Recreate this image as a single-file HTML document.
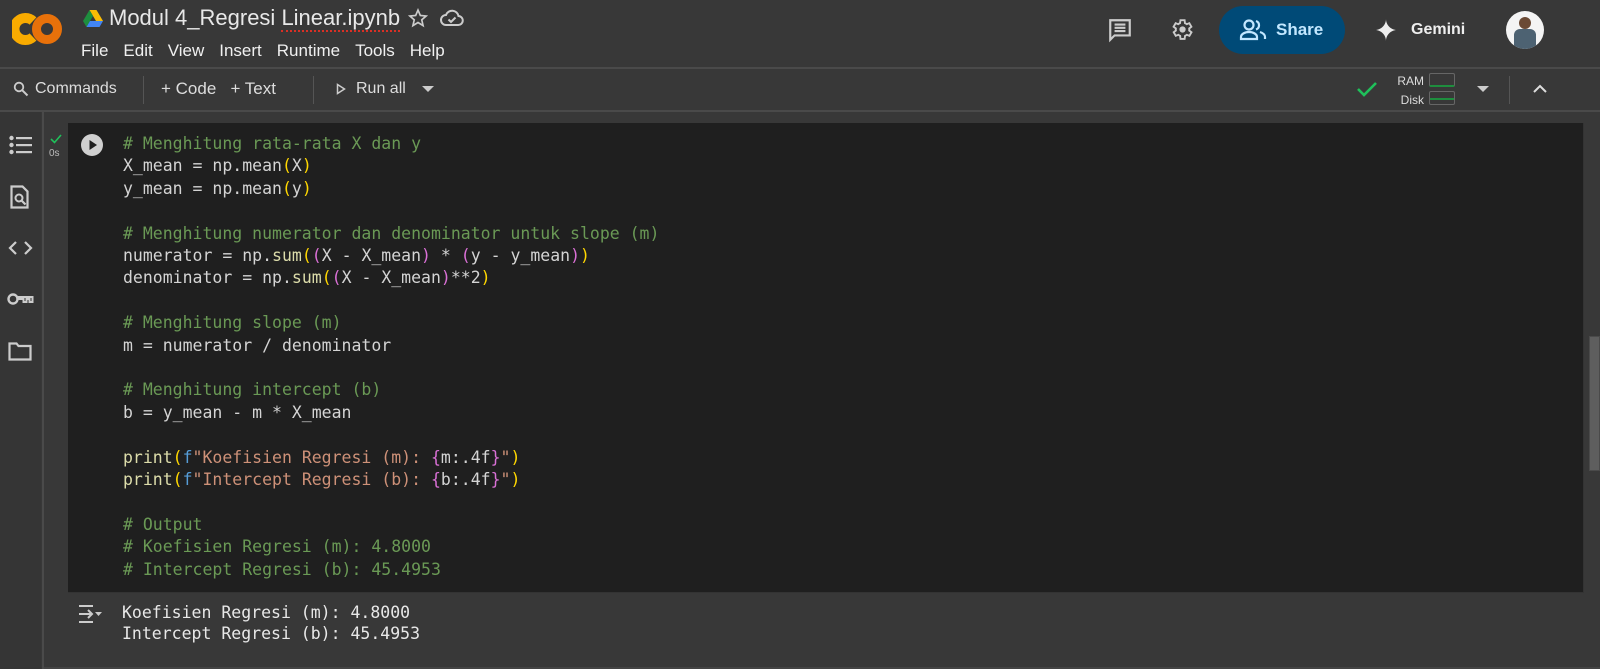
<!DOCTYPE html>
<html><head><meta charset="utf-8"><style>
*{margin:0;padding:0;box-sizing:border-box}
body{width:1600px;height:669px;background:#383838;font-family:"Liberation Sans",sans-serif;color:#e3e3e3;position:relative;overflow:hidden}
.abs{position:absolute}
.hl{position:absolute;left:0;width:1600px;height:2px;background:#4a4a4a}
.menu span{margin-right:15px}
.code{font-family:"DejaVu Sans Mono",monospace;font-size:16.5px;line-height:22.4px;white-space:pre;color:#d4d4d4}
.c{color:#6a9955}.y{color:#ffd700}.p{color:#da70d6}.s{color:#ce9178}.f{color:#dcdcaa}.b{color:#569cd6}
</style></head><body>
<svg class="abs" style="left:12px;top:12px" width="50" height="34" viewBox="0 0 50 34">
<path d="M21 9 A11 11 0 1 0 21 25" stroke="#f9ab00" stroke-width="10" fill="none"/>
<circle cx="35" cy="17" r="10.5" stroke="#e8710a" stroke-width="9" fill="none"/>
</svg>
<svg class="abs" style="left:83px;top:10px" width="20" height="17" viewBox="0 0 20 17">
<path d="M6.5 0h7l6.5 11h-7z" fill="#fbbc04"/><path d="M6.5 0 0 11l3.5 6 6.5-11z" fill="#1e8e3e"/><path d="M3.5 17h13l3.5-6H7z" fill="#4285f4"/>
</svg>
<div class="abs" style="left:109px;top:5px;font-size:22px;color:#e8e8e8">Modul 4_Regresi <span style="border-bottom:2px dotted #d93025">Linear.ipynb</span></div>
<svg class="abs" style="left:408px;top:8px" width="20" height="20" viewBox="0 0 24 24"><path d="M12 2.5l2.8 6.5 7 .6-5.3 4.6 1.6 6.9L12 17.4l-6.1 3.7 1.6-6.9L2.2 9.6l7-.6z" fill="none" stroke="#ccc" stroke-width="2"/></svg>
<svg class="abs" style="left:440px;top:8px" width="24" height="20" viewBox="0 0 24 20"><path d="M6 17h12a4.5 4.5 0 0 0 .5-9A6.5 6.5 0 0 0 6 7a5 5 0 0 0 0 10z" fill="none" stroke="#ccc" stroke-width="2"/><path d="M8.5 11.5l2.5 2.5 4.5-4.5" fill="none" stroke="#ccc" stroke-width="2"/></svg>
<div class="abs menu" style="left:81px;top:41px;font-size:17px;color:#f0f0f0"><span>File</span><span>Edit</span><span>View</span><span>Insert</span><span>Runtime</span><span>Tools</span><span>Help</span></div>
<svg class="abs" style="left:1107px;top:17px" width="26" height="26" viewBox="0 0 24 24"><path d="M3 3h18v14H7l-4 4z" fill="none" stroke="#ccc" stroke-width="2"/><path d="M7 7h10M7 10h10M7 13h10" stroke="#ccc" stroke-width="2"/></svg>
<svg class="abs" style="left:1169px;top:17px" width="25" height="25" viewBox="0 0 24 24"><path d="M19.4 13a7.6 7.6 0 0 0 0-2l2.1-1.6-2-3.5-2.5 1a7 7 0 0 0-1.7-1L15 3h-4l-.4 2.9a7 7 0 0 0-1.7 1l-2.5-1-2 3.5L6.6 11a7.6 7.6 0 0 0 0 2l-2.1 1.6 2 3.5 2.5-1a7 7 0 0 0 1.7 1L11 21h4l.4-2.9a7 7 0 0 0 1.7-1l2.5 1 2-3.5z" fill="none" stroke="#ccc" stroke-width="1.8"/><circle cx="13" cy="12" r="3" fill="#ccc"/></svg>
<div class="abs" style="left:1219px;top:6px;width:126px;height:48px;border-radius:24px;background:#004a77"></div>
<svg class="abs" style="left:1239px;top:19px" width="28" height="22" viewBox="0 0 28 22"><circle cx="10" cy="6" r="4.5" fill="none" stroke="#c2e7ff" stroke-width="2.2"/><path d="M2 20v-2c0-3 4-5 8-5s8 2 8 5v2z" fill="none" stroke="#c2e7ff" stroke-width="2.2"/><path d="M17 2a4.5 4.5 0 0 1 0 8.5M21 13c3 1 5 2.5 5 5v2" fill="none" stroke="#c2e7ff" stroke-width="2.2"/></svg>
<div class="abs" style="left:1276px;top:20px;font-size:17px;font-weight:bold;color:#c2e7ff">Share</div>
<svg class="abs" style="left:1375px;top:19px" width="22" height="22" viewBox="0 0 22 22"><path d="M11 0C11 6 16 11 22 11C16 11 11 16 11 22C11 16 6 11 0 11C6 11 11 6 11 0z" fill="#eee"/></svg>
<div class="abs" style="left:1411px;top:21px;font-size:16px;font-weight:bold;color:#eee">Gemini</div>
<div class="abs" style="left:1506px;top:11px;width:38px;height:38px;border-radius:50%;background:#f4f4f4;overflow:hidden"><div style="position:absolute;left:13px;top:6px;width:12px;height:12px;border-radius:50%;background:#6b4a35"></div><div style="position:absolute;left:8px;top:18px;width:22px;height:22px;background:#4d6272;border-radius:6px 6px 0 0"></div></div>
<div class="hl" style="top:67px"></div>
<svg class="abs" style="left:13px;top:81px" width="16" height="16" viewBox="0 0 16 16"><circle cx="6" cy="6" r="4.3" fill="none" stroke="#ccc" stroke-width="1.8"/><path d="M9.2 9.2 14.5 14.5" stroke="#ccc" stroke-width="2"/></svg>
<div class="abs" style="left:35px;top:80px;font-size:16px;color:#ddd">Commands</div>
<div class="abs" style="left:143px;top:76px;width:1px;height:28px;background:#555"></div>
<div class="abs" style="left:161px;top:79px;font-size:17px;color:#ddd">+ Code &nbsp;&nbsp;+ Text</div>
<div class="abs" style="left:313px;top:76px;width:1px;height:28px;background:#555"></div>
<svg class="abs" style="left:336px;top:83px" width="10" height="12" viewBox="0 0 10 12"><path d="M1.5 1.5v9l7-4.5z" fill="none" stroke="#ccc" stroke-width="1.5"/></svg>
<div class="abs" style="left:356px;top:80px;font-size:16px;color:#ddd">Run all</div>
<svg class="abs" style="left:422px;top:86px" width="12" height="7"><path d="M0 0h12L6 6z" fill="#ccc"/></svg>
<svg class="abs" style="left:1356px;top:80px" width="22" height="18" viewBox="0 0 22 18"><path d="M2 9l6 6L20 3" fill="none" stroke="#1fc05a" stroke-width="2.6"/></svg>
<div class="abs" style="left:1396px;top:72px;font-size:12px;color:#ddd;line-height:19px;text-align:right;width:28px">RAM<br>Disk</div>
<div class="abs" style="left:1429px;top:73px;width:26px;height:14px;border:1px solid #666;border-radius:2px;border-bottom:2px solid #1e8e3e"></div>
<div class="abs" style="left:1429px;top:91px;width:26px;height:14px;border:1px solid #666;border-radius:2px;"><div style="position:absolute;left:0;right:0;top:6px;height:2px;background:#1e8e3e"></div></div>
<svg class="abs" style="left:1477px;top:86px" width="12" height="7"><path d="M0 0h12L6 6z" fill="#ccc"/></svg>
<div class="abs" style="left:1509px;top:76px;width:1px;height:28px;background:#555"></div>
<svg class="abs" style="left:1533px;top:84px" width="14" height="9" viewBox="0 0 14 9"><path d="M1 8l6-6 6 6" fill="none" stroke="#ddd" stroke-width="2"/></svg>
<div class="hl" style="top:110px"></div>
<div class="abs" style="left:0;top:112px;width:41px;height:557px;background:#353535"></div>
<div class="abs" style="left:42px;top:112px;width:2px;height:557px;background:#4a4a4a"></div>
<svg class="abs" style="left:9px;top:135px" width="23" height="20" viewBox="0 0 23 20"><g fill="#ccc"><circle cx="2.5" cy="3" r="2.2"/><circle cx="2.5" cy="10" r="2.2"/><circle cx="2.5" cy="17" r="2.2"/><rect x="7" y="2" width="16" height="2.2"/><rect x="7" y="9" width="16" height="2.2"/><rect x="7" y="16" width="16" height="2.2"/></g></svg>
<svg class="abs" style="left:10px;top:185px" width="21" height="24" viewBox="0 0 21 24"><path d="M1.5 1.5h11l5 5v16h-16z" fill="none" stroke="#ccc" stroke-width="2.2"/><circle cx="9" cy="13" r="3.5" fill="none" stroke="#ccc" stroke-width="2"/><path d="M11.5 15.5l4 4" stroke="#ccc" stroke-width="2.2"/></svg>
<svg class="abs" style="left:8px;top:240px" width="25" height="16" viewBox="0 0 25 16"><path d="M8 2 2 8l6 6M17 2l6 6-6 6" fill="none" stroke="#ccc" stroke-width="2.2"/></svg>
<svg class="abs" style="left:7px;top:291px" width="27" height="16" viewBox="0 0 27 16"><circle cx="6" cy="8" r="4.5" fill="none" stroke="#ccc" stroke-width="2.4"/><path d="M10.5 6h15v5h-3v-3h-3v3h-3v-3h-6" fill="none" stroke="#ccc" stroke-width="2"/></svg>
<svg class="abs" style="left:8px;top:342px" width="24" height="19" viewBox="0 0 24 19"><path d="M1.5 1.5h7l2 2.5h12v13.5h-21z" fill="none" stroke="#ccc" stroke-width="2.2"/></svg>
<svg class="abs" style="left:50px;top:134px" width="12" height="10" viewBox="0 0 12 10"><path d="M1 5l3.5 3.5L11 1" fill="none" stroke="#1fc05a" stroke-width="1.6"/></svg>
<div class="abs" style="left:49px;top:148px;font-size:10px;color:#bbb">0s</div>
<div class="abs" style="left:68px;top:123px;width:1516px;height:470px;background:#1f1f1f;border-right:1px solid #333;border-bottom:1px solid #333"></div>
<svg class="abs" style="left:80px;top:133px" width="24" height="24" viewBox="0 0 24 24"><circle cx="12" cy="12" r="11" fill="#d0d0d0"/><path d="M9.5 7v10l7.5-5z" fill="#1f1f1f"/></svg>
<div class="abs code" style="left:123px;top:133px"><span class="c"># Menghitung rata-rata X dan y</span>
X_mean = np.mean<span class="y">(</span>X<span class="y">)</span>
y_mean = np.mean<span class="y">(</span>y<span class="y">)</span>

<span class="c"># Menghitung numerator dan denominator untuk slope (m)</span>
numerator = np.<span class="f">sum</span><span class="y">(</span><span class="p">(</span>X - X_mean<span class="p">)</span> * <span class="p">(</span>y - y_mean<span class="p">)</span><span class="y">)</span>
denominator = np.<span class="f">sum</span><span class="y">(</span><span class="p">(</span>X - X_mean<span class="p">)</span>**2<span class="y">)</span>

<span class="c"># Menghitung slope (m)</span>
m = numerator / denominator

<span class="c"># Menghitung intercept (b)</span>
b = y_mean - m * X_mean

<span class="f">print</span><span class="y">(</span><span class="b">f</span><span class="s">"Koefisien Regresi (m): </span><span class="p">{</span>m:.4f<span class="p">}</span><span class="s">"</span><span class="y">)</span>
<span class="f">print</span><span class="y">(</span><span class="b">f</span><span class="s">"Intercept Regresi (b): </span><span class="p">{</span>b:.4f<span class="p">}</span><span class="s">"</span><span class="y">)</span>

<span class="c"># Output</span>
<span class="c"># Koefisien Regresi (m): 4.8000</span>
<span class="c"># Intercept Regresi (b): 45.4953</span></div>
<svg class="abs" style="left:77px;top:604px" width="26" height="20" viewBox="0 0 26 20"><path d="M2 2h14M2 18h14M2 10h13M11 6l4 4-4 4" fill="none" stroke="#ccc" stroke-width="2"/><path d="M18 8h7l-3.5 4z" fill="#ccc"/></svg>
<div class="abs code" style="left:122px;top:602px;color:#e8e8e8;line-height:21px">Koefisien Regresi (m): 4.8000
Intercept Regresi (b): 45.4953</div>
<div class="abs" style="left:1589px;top:336px;width:11px;height:135px;background:#5e5e5e;border:1px solid #4a4a4a"></div>
<div class="abs" style="left:44px;top:667px;width:1556px;height:2px;background:#444"></div>
</body></html>
